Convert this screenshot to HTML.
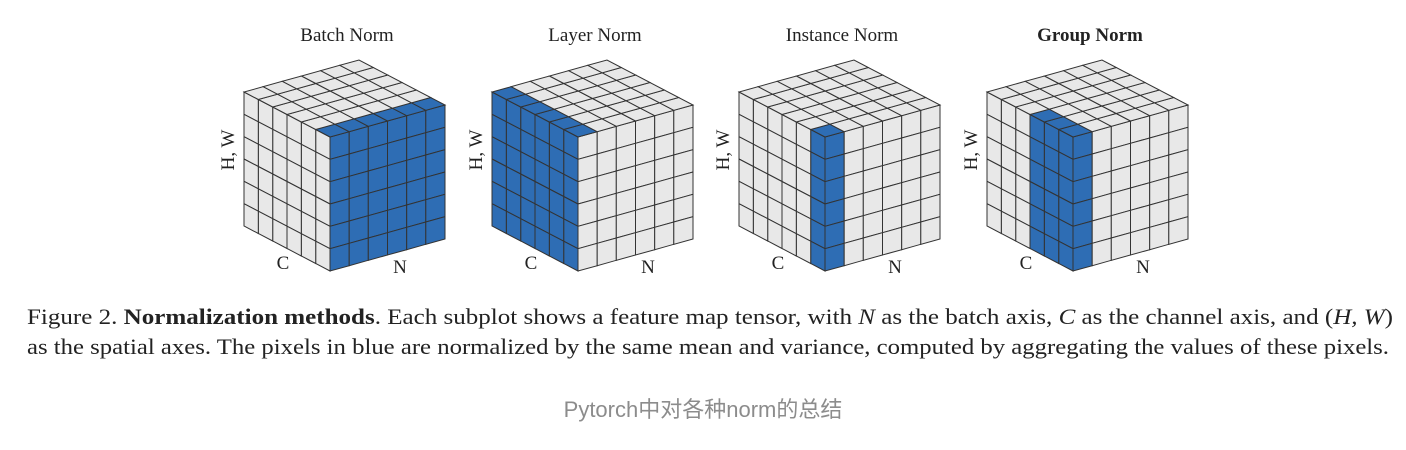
<!DOCTYPE html>
<html><head><meta charset="utf-8">
<style>
body{margin:0;width:1406px;height:450px;background:#fff;overflow:hidden;position:relative;font-family:"Liberation Serif",serif;color:#222}
svg{position:absolute;left:0;top:0}
.cap{position:absolute;left:27px;font-size:22.5px;line-height:30px;white-space:nowrap;transform-origin:0 0}
.bot{position:absolute;left:0;width:1406px;top:392px;text-align:center;font-family:"Liberation Sans","Noto Sans CJK SC",sans-serif;font-size:22px;color:#8c8c8c}
</style></head><body>
<svg id="s" width="1406" height="300" viewBox="0 0 1406 300"></svg>
<div class="cap" id="c1" style="top:302px">Figure 2. <b>Normalization methods</b>. Each subplot shows a feature map tensor, with <i>N</i> as the batch axis, <i>C</i> as the channel axis, and (<i>H, W</i>)</div>
<div class="cap" id="c2" style="top:332px">as the spatial axes. The pixels in blue are normalized by the same mean and variance, computed by aggregating the values of these pixels.</div>
<div class="bot">Pytorch中对各种norm的总结</div>
<script>
var s=document.getElementById('s'),out='';
var G='#e8e8e8',B='#2e6db4',K='#333';
var L=[-86,-45],R=[115,-32],H=134,n=6;
function poly(p,f){out+='<polygon points="'+p.map(q=>q[0].toFixed(1)+','+q[1].toFixed(1)).join(' ')+'" fill="'+f+'" stroke="'+K+'" stroke-width="1"/>';}
function cube(fx,fy,title,bold,blue){
 var F=[fx,fy];
 function lf(u,v){return [F[0]+u*L[0],F[1]+u*L[1]+v*H];}
 function rf(u,v){return [F[0]+u*R[0],F[1]+u*R[1]+v*H];}
 function tp(u,w){return [F[0]+u*L[0]+w*R[0],F[1]+u*L[1]+w*R[1]];}
 [['l',lf],['r',rf],['t',tp]].forEach(function(fc){
  for(var i=0;i<n;i++)for(var j=0;j<n;j++){
   var f=fc[1],a=i/n,b=(i+1)/n,c=j/n,d=(j+1)/n;
   poly([f(a,c),f(b,c),f(b,d),f(a,d)],blue(fc[0],i,j)?B:G);
  }});
 out+='<text x="'+(fx+17)+'" y="41" text-anchor="middle" font-size="19" font-family="Liberation Serif" '+(bold?'font-weight="bold"':'')+' fill="#222">'+title+'</text>';
 out+='<text transform="translate('+(fx-96)+',150) rotate(-90)" text-anchor="middle" font-size="19" font-family="Liberation Serif" fill="#222">H, W</text>';
 out+='<text x="'+(fx-47)+'" y="269" text-anchor="middle" font-size="19" font-family="Liberation Serif" fill="#222">C</text>';
 out+='<text x="'+(fx+70)+'" y="273" text-anchor="middle" font-size="19" font-family="Liberation Serif" fill="#222">N</text>';
}
cube(330,137,'Batch Norm',false,function(f,i,j){return f=='r'||(f=='t'&&i==0);});
cube(578,137,'Layer Norm',false,function(f,i,j){return f=='l'||(f=='t'&&j==0);});
cube(825,137,'Instance Norm',false,function(f,i,j){return (f=='l'&&i==0)||(f=='r'&&i==0)||(f=='t'&&i==0&&j==0);});
cube(1073,137,'Group Norm',true,function(f,i,j){return (f=='l'&&i<3)||(f=='r'&&i==0)||(f=='t'&&i<3&&j==0);});
s.innerHTML=out;
function fit(id,w){var e=document.getElementById(id);var nw=e.getBoundingClientRect().width;e.style.transform='scaleX('+(w/nw)+')';}
fit('c1',1366);fit('c2',1362);
</script>
</body></html>
